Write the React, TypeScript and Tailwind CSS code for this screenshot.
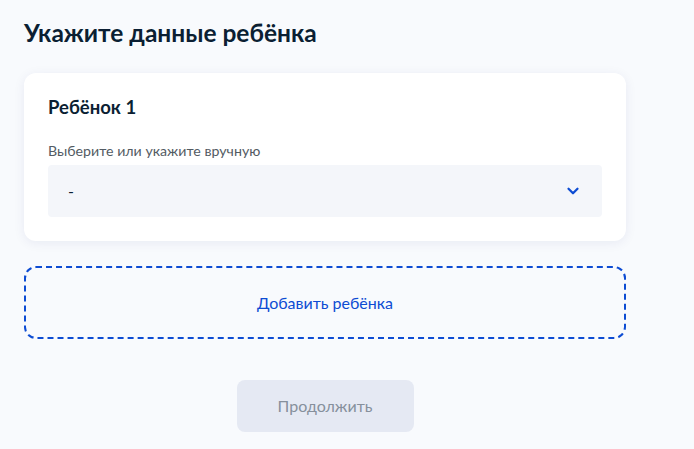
import { ChevronDown } from 'lucide-react';

export default function App() {
  return (
    <div
      className="min-h-[449px] w-full bg-[#f8fafd] px-6 pt-[18px]"
      style={{ fontFamily: 'Lato, "Noto Sans", sans-serif' }}
    >
      <div className="w-[602px]">
        <h1 className="text-[24.5px] font-bold leading-[30px] text-[#0b1f33]">Укажите данные ребёнка</h1>

        <div className="mt-[25px] rounded-xl bg-white px-6 pb-6 pt-[22px] shadow-[0_2px_12px_rgba(0,35,110,0.07)]">
          <h2 className="text-[18.5px] font-bold leading-6 text-[#0b1f33]">Ребёнок 1</h2>
          <div className="mt-[22px] text-[14.2px] leading-5 text-[#535b63]">Выберите или укажите вручную</div>
          <div className="mt-1 flex h-[52px] items-center justify-between rounded bg-[#f4f6fa] pl-5 pr-[20px]">
            <span className="text-[16px] text-[#0b1f33]">-</span>
            <ChevronDown className="h-[18px] w-[18px] text-[#0d4cd3]" strokeWidth={3} />
          </div>
        </div>

        <button className="mt-[25px] flex h-[73px] w-full items-center justify-center rounded-xl border-2 border-dashed border-[#0d4cd3] text-[16px] text-[#0d4cd3]">
          Добавить ребёнка
        </button>

        <div className="mt-[41px] flex justify-center">
          <button className="h-[52px] w-[177px] rounded-lg bg-[#e5e9f3] text-[16px] text-[#86909c]">Продолжить</button>
        </div>
      </div>
    </div>
  );
}
